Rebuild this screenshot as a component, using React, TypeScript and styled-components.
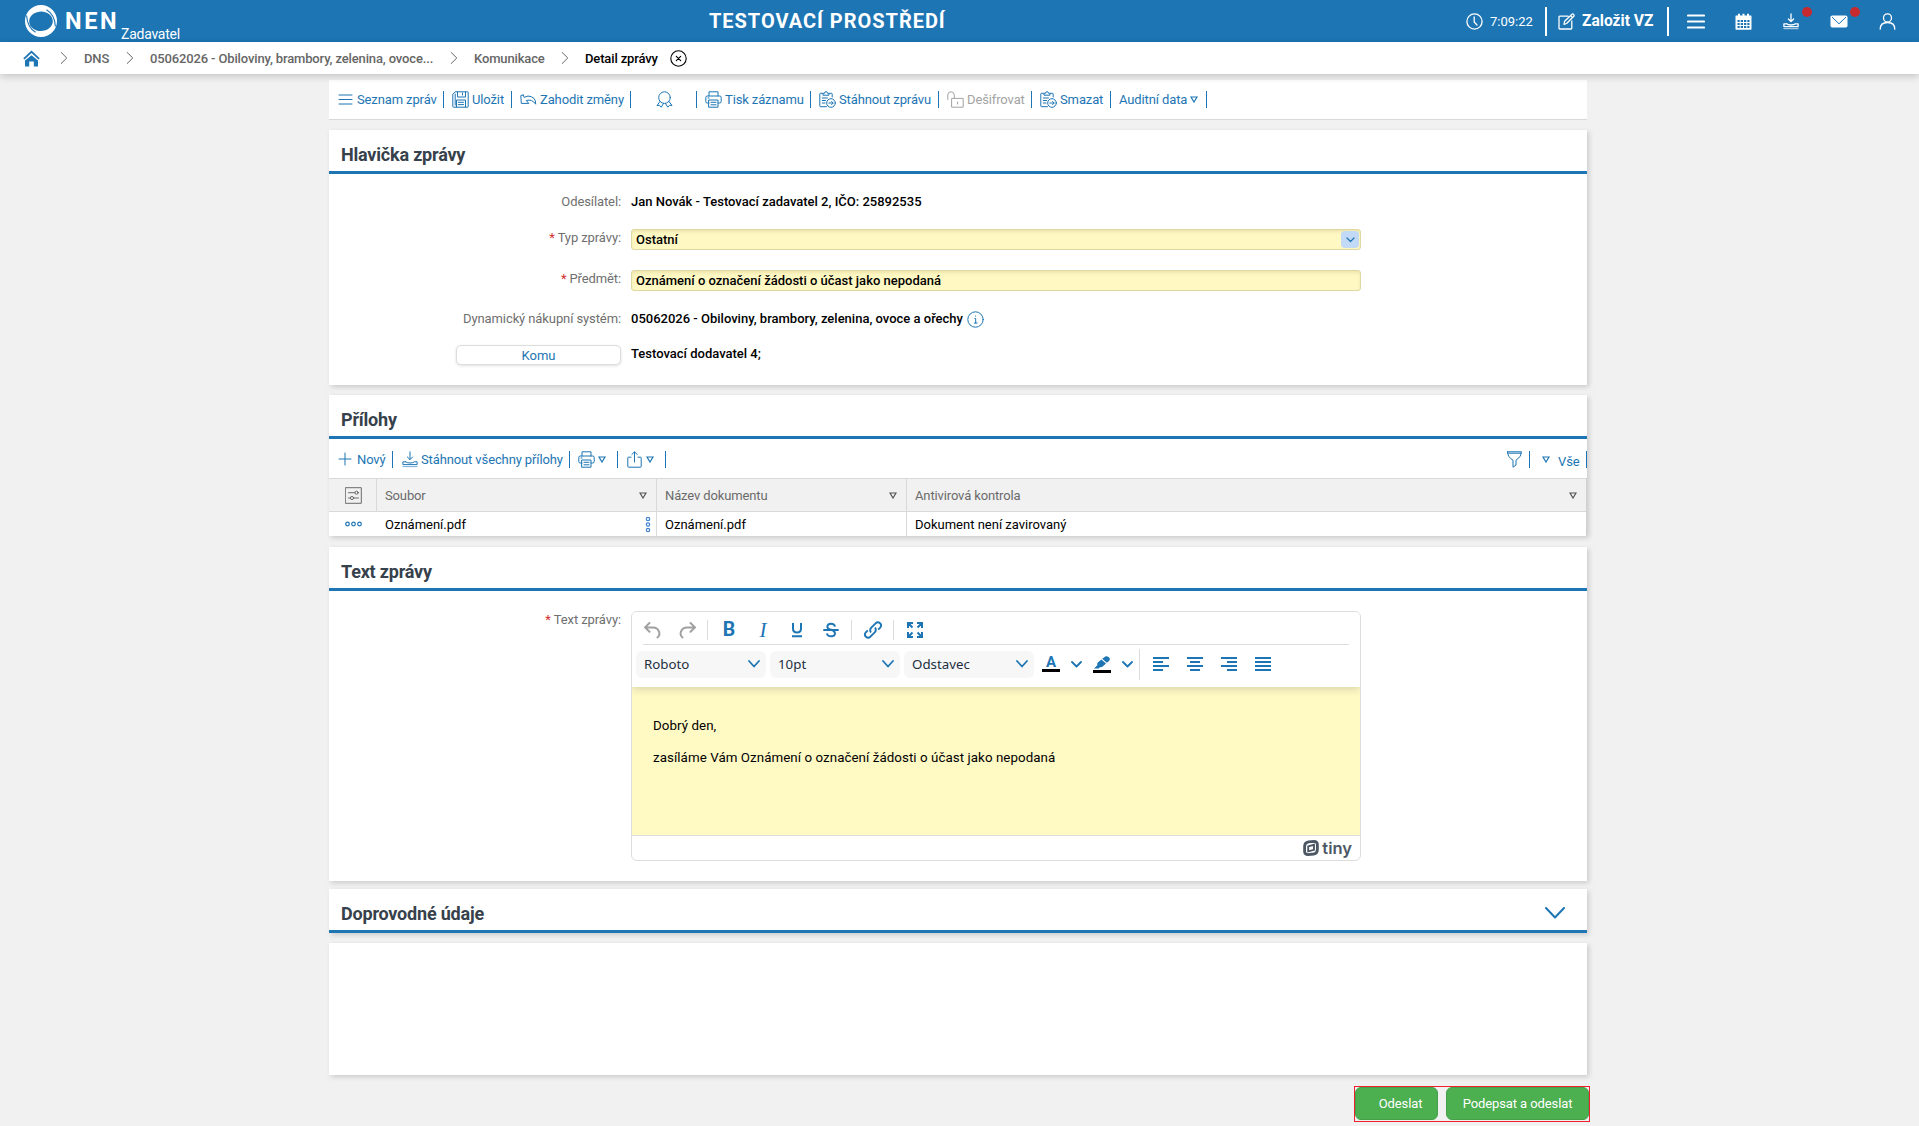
import React from "react";
import styled, { createGlobalStyle, css } from "styled-components";

const blue = "#1d75b4";
const line = "#d9d9d9";

const GlobalStyle = createGlobalStyle`
  *, *::before, *::after { box-sizing: border-box; }
  html, body { margin: 0; padding: 0; background: #f1f1f1; }
  body { font-family: Roboto, "Liberation Sans", sans-serif; font-size: 13px; color: #000; }
  svg { display: block; flex: none; }
`;

const Page = styled.div`
  height: 1126px;
  overflow: hidden;
  display: flex;
  flex-direction: column;
`;

/* ---------- top bar ---------- */

const TopBar = styled.header`
  height: 42px;
  flex: none;
  display: grid;
  grid-template-columns: 709px 1fr auto;
  background: ${blue};
  color: #fff;
`;

const Brand = styled.div`
  display: flex;
  align-items: flex-start;
  padding: 4px 0 0 24px;
`;

const BrandName = styled.span`
  width: 56px;
  margin-left: 7px;
  padding-top: 4px;
  font-size: 23.5px;
  line-height: 27px;
  font-weight: 700;
  letter-spacing: 2.6px;
`;

const BrandRole = styled.span`
  padding-top: 21px;
  font-size: 14px;
  line-height: 18px;
  letter-spacing: -0.25px;
`;

const Environment = styled.div`
  font-size: 20px;
  line-height: 43px;
  font-weight: 700;
  letter-spacing: 0.97px;
  white-space: nowrap;
`;

const TopActions = styled.div`
  display: flex;
  align-items: center;
  height: 42px;
  padding-right: 22px;
`;

const Clock = styled.div`
  display: flex;
  align-items: center;
  gap: 7px;
  width: 79px;
`;

const TopRule = styled.i`
  width: 2px;
  height: 29px;
  background: #fff;
`;

const NewTender = styled.div`
  display: flex;
  align-items: center;
  gap: 6px;
  width: 120px;
  padding-left: 11px;
  font-size: 15.6px;
  font-weight: 700;
  white-space: nowrap;
`;

const TopIcon = styled.div<{ $l?: number }>`
  position: relative;
  width: 48px;
  height: 42px;
  margin-left: ${(p) => p.$l ?? 0}px;
  display: flex;
  align-items: center;
  justify-content: center;
  &:last-child { margin-right: -14px; }
`;

const Dot = styled.i`
  position: absolute;
  right: 3px;
  top: 7px;
  width: 10px;
  height: 10px;
  border-radius: 50%;
  background: #c62a2f;
`;

/* ---------- breadcrumb ---------- */

const Crumbs = styled.nav`
  height: 32px;
  flex: none;
  display: flex;
  align-items: center;
  padding-left: 23px;
  background: #fff;
  box-shadow: 0 2px 8px rgba(0, 0, 0, 0.2);
  position: relative;
`;

const Crumb = styled.span<{ $w: number; $current?: boolean }>`
  width: ${(p) => p.$w}px;
  font-weight: 500;
  letter-spacing: -0.14px;
  color: ${(p) => (p.$current ? "#000" : "#666")};
  white-space: nowrap;
`;

const CrumbArrow = styled.span`
  width: 8px;
  margin-right: 16px;
`;

/* ---------- content ---------- */

const Content = styled.main`
  width: 1258px;
  margin-left: 329px;
  padding-top: 6px;
  display: flex;
  flex-direction: column;
`;

const Toolbar = styled.div`
  height: 40px;
  display: flex;
  align-items: center;
  background: #fff;
  border-bottom: 1px solid ${line};
`;

const Tool = styled.div<{ $w: number; $pad?: number; $gap?: number; $off?: boolean }>`
  width: ${(p) => p.$w}px;
  height: 17px;
  margin-bottom: 1px;
  padding-left: ${(p) => p.$pad ?? 8}px;
  display: flex;
  align-items: center;
  gap: ${(p) => p.$gap ?? 3}px;
  border-right: 1px solid ${blue};
  letter-spacing: -0.12px;
  color: ${(p) => (p.$off ? "#a3a3a3" : blue)};
  white-space: nowrap;
`;

const Panel = styled.section<{ $top: number; $h: number }>`
  height: ${(p) => p.$h}px;
  margin-top: ${(p) => p.$top}px;
  background: #fff;
  box-shadow: 2px 2px 5px rgba(0, 0, 0, 0.16);
`;

const PanelTitle = styled.h2`
  height: 44px;
  margin: 0;
  padding: 8px 22px 0 12px;
  display: flex;
  align-items: center;
  justify-content: space-between;
  border-bottom: 3px solid ${blue};
  font-size: 18px;
  font-weight: 700;
  letter-spacing: -0.2px;
  color: #36414b;
  & > svg { margin-bottom: 2px; color: ${blue}; }
`;

const FormRow = styled.div<{ $h: number }>`
  height: ${(p) => p.$h}px;
  display: grid;
  grid-template-columns: 292px 730px;
  column-gap: 10px;
  align-items: start;
`;

const Label = styled.label<{ $lift?: number }>`
  padding-top: ${(p) => p.$lift ?? 0}px;
  line-height: 18px;
  text-align: right;
  letter-spacing: -0.1px;
  color: #6f6f6f;
`;

const Star = styled.span`
  margin-right: 3px;
  color: #d32f2f;
`;

const Value = styled.div`
  padding-top: 1px;
  display: flex;
  align-items: center;
  gap: 4px;
  line-height: 20px;
  font-weight: 500;
`;

const Input = styled.div`
  height: 21px;
  padding: 0 1px 0 4px;
  display: flex;
  align-items: center;
  justify-content: space-between;
  border: 1px solid #ddd7a4;
  border-radius: 3px;
  background: #fff8c3;
  box-shadow: inset 0 2px 3px rgba(120, 110, 20, 0.13);
  font-weight: 500;
`;

const DropMark = styled.span`
  width: 18px;
  height: 17px;
  display: grid;
  place-items: center;
  border-radius: 4px;
  background: #c3daf6;
  color: ${blue};
`;

const Recipient = styled.button`
  justify-self: end;
  width: 165px;
  height: 20px;
  margin-top: 2px;
  padding: 0;
  border: 1px solid #ddd;
  border-radius: 5px;
  background: #fff;
  box-shadow: 0 1px 3px rgba(0, 0, 0, 0.12);
  font: inherit;
  color: ${blue};
`;

/* ---------- attachments ---------- */

const ListTools = styled.div`
  height: 39px;
  padding-top: 2px;
  display: flex;
  align-items: center;
`;

const Spacer = styled.div`
  flex: 1;
`;

const Lowered = styled.span`
  padding-top: 4px;
`;

const Table = styled.div`
  width: 1258px;
  border-right: 1px solid #d0d0d0;
`;

const rowCells = css`
  display: grid;
  grid-template-columns: 48px 280px 250px 1fr;
`;

const HeadRow = styled.div`
  ${rowCells}
  height: 34px;
  border-top: 1px solid ${line};
  border-bottom: 1px solid ${line};
  background: #f1f1f1;
  letter-spacing: -0.13px;
  color: #6b6b6b;
`;

const BodyRow = styled.div`
  ${rowCells}
  height: 24px;
`;

const Cell = styled.div<{ $icon?: boolean; $plain?: boolean; $right?: number }>`
  display: flex;
  align-items: center;
  justify-content: ${(p) => (p.$icon ? "center" : "space-between")};
  padding: 0 ${(p) => (p.$icon ? 0 : p.$right ?? 9)}px 0 ${(p) => (p.$icon ? 1 : 8)}px;
  border-right: 1px solid ${(p) => (p.$plain ? "transparent" : line)};
  &:last-child { border-right: 0; }
`;

/* ---------- editor ---------- */

const Editor = styled.div`
  height: 250px;
  display: flex;
  flex-direction: column;
  border: 1px solid #ddd;
  border-radius: 6px;
  overflow: hidden;
`;

const EditorBars = styled.div`
  height: 75px;
  flex: none;
  position: relative;
  background: #fff;
  box-shadow: 0 2px 8px rgba(34, 47, 62, 0.18);
`;

const EditorRow = styled.div<{ $h: number; $ruled?: boolean }>`
  height: ${(p) => p.$h}px;
  margin: 0 ${(p) => (p.$ruled ? 11 : 0)}px;
  padding-top: ${(p) => (p.$ruled ? 4 : 0)}px;
  display: flex;
  align-items: center;
  border-bottom: ${(p) => (p.$ruled ? "1px solid #ddd" : "0")};
  color: ${blue};
`;

const EditorButton = styled.span<{ $w?: number; $off?: boolean }>`
  width: ${(p) => p.$w ?? 34}px;
  height: 28px;
  flex: none;
  display: flex;
  flex-direction: column;
  align-items: center;
  justify-content: center;
  color: ${(p) => (p.$off ? "#a0a0a0" : blue)};
`;

const Rule = styled.i<{ $h: number; $l: number; $r: number }>`
  width: 1px;
  height: ${(p) => p.$h}px;
  margin: 0 ${(p) => p.$r}px 0 ${(p) => p.$l}px;
  flex: none;
  background: #dcdcdc;
`;

const BoldMark = styled.span`
  font-size: 19.5px;
  line-height: 24px;
  font-weight: 700;
`;

const ItalicMark = styled.span`
  font-family: "Liberation Serif", serif;
  font-size: 21px;
  line-height: 24px;
  font-style: italic;
`;

const ColorMark = styled.span`
  height: 12px;
  font-size: 15px;
  line-height: 13px;
  font-weight: 700;
`;

const ColorBar = styled.i`
  width: 18px;
  height: 3px;
  margin-top: 1px;
  background: #000;
`;

const Select = styled.div`
  width: 130px;
  height: 27px;
  margin-right: 4px;
  padding: 0 6px 0 8px;
  display: flex;
  align-items: center;
  justify-content: space-between;
  border-radius: 6px;
  background: #f7f7f7;
  font-family: "Noto Sans", sans-serif;
  font-size: 13.3px;
  color: #222f3e;
  & > svg { color: ${blue}; }
`;

const EditorBody = styled.div`
  flex: 1;
  padding: 31px 21px;
  background: #fff9c4;
  font-size: 13.333px;
  line-height: 16px;
  letter-spacing: 0.06px;
`;

const Paragraph = styled.p`
  margin: 0 0 16px;
`;

const StatusBar = styled.div`
  height: 25px;
  flex: none;
  padding-right: 8px;
  display: flex;
  align-items: center;
  justify-content: flex-end;
  gap: 3px;
  border-top: 1px solid #ddd;
  font-family: Inter, sans-serif;
  font-size: 16.5px;
  font-weight: 600;
  color: #4c5765;
`;

/* ---------- footer ---------- */

const Submit = styled.div`
  align-self: flex-end;
  width: 236px;
  height: 36px;
  margin: 11px -3px 0 0;
  display: flex;
  justify-content: space-between;
  border: 1px solid #f0202c;
`;

const Green = styled.button<{ $w: number; $shift?: number }>`
  width: ${(p) => p.$w}px;
  height: 33px;
  padding: 0 0 0 ${(p) => p.$shift ?? 0}px;
  border: 1px solid #46a049;
  border-radius: 6px;
  background: #4caf50;
  font: inherit;
  letter-spacing: -0.1px;
  color: #fff;
`;

/* ---------- icons ---------- */

type IconProps = { w?: number; h?: number; sw?: number; box?: string; children: React.ReactNode };

const Icon = ({ w = 17, h = 17, sw = 1, box, children }: IconProps) => (
  <svg width={w} height={h} viewBox={box ?? `0 0 ${w} ${h}`} fill="none" stroke="currentColor" strokeWidth={sw} strokeLinecap="round" strokeLinejoin="round">
    {children}
  </svg>
);

const Lines = ({ w = 15, sw = 1, step = 4.5 }) => (
  <Icon w={w} h={17} sw={sw}>
    <path d={`M1 ${8.5 - step}H${w - 1}M1 8.5H${w - 1}M1 ${8.5 + step}H${w - 1}`} />
  </Icon>
);

const Triangle = ({ c = blue }) => (
  <svg width="8" height="7" viewBox="0 0 8 7" fill="none" stroke={c} strokeWidth="1.2">
    <path d="M1 1H7L4 6Z" />
  </svg>
);

const Chevron = ({ w = 12, h = 8, sw = 1.8 }) => (
  <Icon w={w} h={h} sw={sw}>
    <path d={`M1 1L${w / 2} ${h - 1.5}L${w - 1} 1`} />
  </Icon>
);

const Printer = () => (
  <Icon>
    <path d="M4 5V.8H13V5M4 12H2.2Q.8 12 .8 10.5V6.5Q.8 5 2.2 5H14.8Q16.2 5 16.2 6.5V10.5Q16.2 12 14.8 12H13M4 9H13V16.2H4ZM6 11.3H11M6 13.8H11M3 7H4" />
  </Icon>
);

const Clipboard = () => (
  <Icon>
    <path d="M7.5 15.7H1.5Q.8 15.7.8 15V3Q.8 2.3 1.5 2.3H4V4.2H10V2.3H12.5Q13.2 2.3 13.2 3V6M4.5 2.3H5.5Q5.5.7 7 .7T8.6 2.3H9.5M3.3 7H8.5M3.3 9.5H6.5M3.3 12H6" />
    <circle cx="12" cy="12" r="4.3" />
    <path d="M9.8 12H14M12.6 10.4L14.2 12L12.6 13.6" />
  </Icon>
);

const Download = ({ sw = 1.1 }) => (
  <Icon w={16} h={17} sw={sw}>
    <path d="M8 .8V8.4M5.4 6L8 8.6L10.6 6M3.6 10.8H.9V13.6H15.1V10.8H12.4Q11.2 12 8 12T3.6 10.8" />
    <path d="M.9 15.6H15.1" strokeOpacity="0.6" />
  </Icon>
);

const Align = ({ rows }: { rows: [number, number][] }) => (
  <svg width="16" height="14" viewBox="0 0 16 14" fill="currentColor">
    {rows.map(([x, w], i) => (
      <rect key={i} x={x} y={i * 4} width={w} height="2" />
    ))}
  </svg>
);

const BackArrow = ({ flip }: { flip?: boolean }) => (
  <Icon w={18} h={18} sw={2}>
    <path transform={flip ? "matrix(-1 0 0 1 18 0)" : undefined} d="M6.5 2L2 6.4L6.5 10.8M2.5 6.4H10C16.5 6.4 18 14 14.5 16.5" />
  </Icon>
);

const Arrow = () => (
  <CrumbArrow>
    <Icon w={8} h={14} sw={1}>
      <path d="M1.2 1.5L6.8 7L1.2 12.5" stroke="#666" />
    </Icon>
  </CrumbArrow>
);

const Form = styled.div<{ $top: number }>`
  padding-top: ${(p) => p.$top}px;
`;

export default function App() {
  return (
    <Page>
      <GlobalStyle />
      <TopBar>
        <Brand>
          <svg width="34" height="34" viewBox="0 0 34 34">
            <path fill="#fff" fillRule="evenodd" d="M17 1A16 16 0 1 0 17 33A16 16 0 1 0 17 1ZM17.4 7.4C22.6 7.4 28.8 11 28.8 17C28.8 23 23 27 17 27C11 27 5.2 23.4 5.2 17.2C5.2 11 11.6 7.4 17.4 7.4Z" />
            <path d="M2.6 11.5C3 18.5 5.5 24.8 11.6 28.2M31.4 22.5C31 15.5 28.5 9.2 22.4 5.8" fill="none" stroke={blue} strokeWidth="1.1" />
          </svg>
          <BrandName>NEN</BrandName>
          <BrandRole>Zadavatel</BrandRole>
        </Brand>
        <Environment>TESTOVACÍ PROSTŘEDÍ</Environment>
        <TopActions>
          <Clock>
            <Icon sw={1.3}>
              <circle cx="8.5" cy="8.5" r="7.6" />
              <path d="M8.2 4V9L11 12" />
            </Icon>
            7:09:22
          </Clock>
          <TopRule />
          <NewTender>
            <Icon w={18} sw={1.3}>
              <path d="M10 3.2H1.7Q1 3.2 1 4V15.3Q1 16 1.7 16H13Q13.8 16 13.8 15.3V8M6 11.3L6.6 8.3L14 1.2Q14.7.6 15.5 1.3T16 3L8.6 10.5ZM12.6 2.6L14.5 4.6" />
            </Icon>
            Založit VZ
          </NewTender>
          <TopRule />
          <TopIcon $l={3}><Lines w={18} sw={2.2} step={6} /></TopIcon>
          <TopIcon $l={-1}>
            <svg width="17" height="17" viewBox="0 0 17 17" fill="#fff">
              <path fillRule="evenodd" d="M1 2.5H3V.7H5V2.5H7.5V.7H9.5V2.5H12V.7H14V2.5H16Q16.5 2.5 16.5 3V16Q16.5 16.7 16 16.7H1Q.5 16.7.5 16V3Q.5 2.5 1 2.5ZM2.5 7V9H4.7V7ZM5.7 7V9H8V7ZM9 7V9H11.3V7ZM12.3 7V9H14.5V7ZM2.5 10V12H4.7V10ZM5.7 10V12H8V10ZM9 10V12H11.3V10ZM12.3 10V12H14.5V10ZM2.5 13V15H4.7V13ZM5.7 13V15H8V13ZM9 13V15H11.3V13ZM12.3 13V15H14.5V13Z" />
            </svg>
          </TopIcon>
          <TopIcon><Download sw={1.3} /><Dot /></TopIcon>
          <TopIcon>
            <svg width="18" height="13" viewBox="0 0 18 13">
              <rect x=".5" y=".5" width="17" height="12" rx="1.8" fill="#fff" />
              <path d="M2 2L9 8.8L16 2" fill="none" stroke={blue} />
            </svg>
            <Dot />
          </TopIcon>
          <TopIcon>
            <Icon sw={1.3}>
              <circle cx="8.5" cy="4.9" r="4" />
              <path d="M1.2 16.2Q1.2 9.5 8.5 9.5T15.8 16.2" />
            </Icon>
          </TopIcon>
        </TopActions>
      </TopBar>

      <Crumbs>
        <Crumb $w={37}>
          <svg width="17" height="17" viewBox="0 0 17 17" fill={blue}>
            <path d="M8.5 5.2L15 10.6V16.5H10.8V11.5H6.2V16.5H2V10.6ZM.3 8.2L8.5.4L16.7 8.2L15.5 9.4L8.5 3L1.5 9.4Z" />
          </svg>
        </Crumb>
        <Arrow />
        <Crumb $w={42}>DNS</Crumb>
        <Arrow />
        <Crumb $w={300}>05062026 - Obiloviny, brambory, zelenina, ovoce...</Crumb>
        <Arrow />
        <Crumb $w={87}>Komunikace</Crumb>
        <Arrow />
        <Crumb $w={85} $current>Detail zprávy</Crumb>
        <Icon sw={1.1}>
          <circle cx="8.5" cy="8.5" r="7.7" stroke="#000" />
          <path d="M6.3 6.3L10.7 10.7M10.7 6.3L6.3 10.7" stroke="#000" />
        </Icon>
      </Crumbs>

      <Content>
        <Toolbar>
          <Tool $w={115} $pad={9} $gap={4}><Lines />Seznam zpráv</Tool>
          <Tool $w={68}>
            <Icon>
              <path d="M3.5.8H15.5Q16.2.8 16.2 1.5V15.5Q16.2 16.2 15.5 16.2H1.5Q.8 16.2.8 15.5V3.5ZM3.2 3V14M5.5 1V6H13.5V1M10.5 2V4M4.5 16V9H13.5V16M6.3 11.3H11.5M6.3 13.6H11.5" />
            </Icon>
            Uložit
          </Tool>
          <Tool $w={119}>
            <Icon>
              <path d="M3.2 3.9L.8 4.6L1.3 12.4H8.8L6.3 9.5Q12 7.8 15.7 13.2Q16 5.6 8 5L4.2 6.4L3.2 3.9" />
            </Icon>
            Zahodit změny
          </Tool>
          <Tool $w={66} $pad={25}>
            <Icon>
              <circle cx="8.5" cy="6.6" r="5.8" />
              <path d="M4 10.5L1 14.5L3.5 14.3L5.2 16.2L7.5 12.5M13 10.5L16 14.5L13.5 14.3L11.8 16.2L9.5 12.5" />
            </Icon>
          </Tool>
          <Tool $w={114}><Printer />Tisk záznamu</Tool>
          <Tool $w={128}><Clipboard />Stáhnout zprávu</Tool>
          <Tool $w={93} $off>
            <Icon>
              <path d="M5 7.4H16.2V16.2H5ZM.8 8.5V4Q.8.8 4 .8T7.3 4V7.2M10.6 11V13" />
            </Icon>
            Dešifrovat
          </Tool>
          <Tool $w={79}><Clipboard />Smazat</Tool>
          <Tool $w={96}>Auditní data <Triangle /></Tool>
        </Toolbar>

        <Panel $top={10} $h={255}>
          <PanelTitle>Hlavička zprávy</PanelTitle>
          <Form $top={17}>
            <FormRow $h={38}>
              <Label $lift={2}>Odesílatel:</Label>
              <Value>Jan Novák - Testovací zadavatel 2, IČO: 25892535</Value>
            </FormRow>
            <FormRow $h={41}>
              <Label><Star>*</Star>Typ zprávy:</Label>
              <Input>
                Ostatní
                <DropMark><Chevron w={9} h={6} sw={1.2} /></DropMark>
              </Input>
            </FormRow>
            <FormRow $h={38}>
              <Label><Star>*</Star>Předmět:</Label>
              <Input>Oznámení o označení žádosti o účast jako nepodaná</Input>
            </FormRow>
            <FormRow $h={35}>
              <Label $lift={2}>Dynamický nákupní systém:</Label>
              <Value>
                05062026 - Obiloviny, brambory, zelenina, ovoce a ořechy
                <Icon>
                  <circle cx="8.5" cy="8.5" r="7.7" stroke={blue} />
                  <path d="M8.5 5V5.2M7.8 7.5H8.7V12M7.5 12H10" stroke={blue} />
                </Icon>
              </Value>
            </FormRow>
            <FormRow $h={24}>
              <Recipient>Komu</Recipient>
              <Value>Testovací dodavatel 4;</Value>
            </FormRow>
          </Form>
        </Panel>

        <Panel $top={10} $h={141}>
          <PanelTitle>Přílohy</PanelTitle>
          <ListTools>
            <Tool $w={64} $pad={9} $gap={5}>
              <Icon w={14} h={14}><path d="M7 1V13M1 7H13" /></Icon>
              Nový
            </Tool>
            <Tool $w={177} $pad={9}><Download sw={1} />Stáhnout všechny přílohy</Tool>
            <Tool $w={48}><Printer /><Triangle /></Tool>
            <Tool $w={48} $pad={9} $gap={4}>
              <Icon w={15}>
                <path d="M4 6.2H1.5Q.8 6.2.8 7V15.5Q.8 16.2 1.5 16.2H13.5Q14.2 16.2 14.2 15.5V7Q14.2 6.2 13.5 6.2H11M7.5 11V1M4.8 3.5L7.5.8L10.2 3.5" />
              </Icon>
              <Triangle />
            </Tool>
            <Spacer />
            <Tool $w={32}>
              <Icon><path d="M1.5.8H15.5Q15.5 6 10 9.2V14L7 16.2V9.2Q1.5 6 1.5.8ZM2 2.2H15" /></Icon>
            </Tool>
            <Tool $w={57} $pad={12} $gap={8}><Triangle /><Lowered>Vše</Lowered></Tool>
          </ListTools>
          <Table>
            <HeadRow>
              <Cell $icon>
                <Icon>
                  <path d="M.7.7H16.3V16.3H.7ZM3.5 5.7H10M13 5.7H13.5M3.5 11H5.5M9 11H13.5" />
                  <circle cx="11.5" cy="5.7" r="1.6" />
                  <circle cx="7" cy="11" r="1.6" />
                </Icon>
              </Cell>
              <Cell>Soubor<Triangle c="#555" /></Cell>
              <Cell>Název dokumentu<Triangle c="#555" /></Cell>
              <Cell>Antivirová kontrola<Triangle c="#555" /></Cell>
            </HeadRow>
            <BodyRow>
              <Cell $icon $plain>
                <svg width="17" height="6" viewBox="0 0 17 6" fill="none" stroke={blue} strokeWidth="1.2">
                  <circle cx="2.5" cy="3" r="1.8" /><circle cx="8.5" cy="3" r="1.8" /><circle cx="14.5" cy="3" r="1.8" />
                </svg>
              </Cell>
              <Cell $right={5}>
                Oznámení.pdf
                <svg width="6" height="17" viewBox="0 0 6 17" fill="none" stroke="#3f82d6" strokeWidth="1.2">
                  <circle cx="3" cy="3" r="1.7" /><circle cx="3" cy="8.5" r="1.7" /><circle cx="3" cy="14" r="1.7" />
                </svg>
              </Cell>
              <Cell>Oznámení.pdf</Cell>
              <Cell>Dokument není zavirovaný</Cell>
            </BodyRow>
          </Table>
        </Panel>

        <Panel $top={11} $h={334}>
          <PanelTitle>Text zprávy</PanelTitle>
          <Form $top={20}>
            <FormRow $h={250}>
              <Label><Star>*</Star>Text zprávy:</Label>
              <Editor>
                <EditorBars>
                  <EditorRow $h={33} $ruled>
                    <EditorButton $w={18} $off><BackArrow /></EditorButton>
                    <EditorButton $w={54} $off><BackArrow flip /></EditorButton>
                    <Rule $h={20} $l={-8} $r={4} />
                    <EditorButton><BoldMark>B</BoldMark></EditorButton>
                    <EditorButton><ItalicMark>I</ItalicMark></EditorButton>
                    <EditorButton>
                      <Icon w={12} h={16} sw={2}>
                        <path d="M2 1V6.5Q2 10.5 6 10.5T10 6.5V1M1 14.3H11" strokeLinecap="butt" />
                      </Icon>
                    </EditorButton>
                    <EditorButton>
                      <Icon w={16} h={16} sw={1.9}>
                        <path d="M12 4.6Q11.5 1.7 8 1.7T4.3 4.6Q4.3 7 8 7.8T12 11.3Q12 14.3 8.2 14.3T4 11.3M.3 8H15.7" strokeLinecap="butt" />
                      </Icon>
                    </EditorButton>
                    <Rule $h={20} $l={3} $r={4} />
                    <EditorButton>
                      <Icon w={20} h={20} box="0 0 20 20" sw={1.9}>
                        <path d="M8 12.6Q6.2 9.8 8.3 7.6L12.6 3.3Q14.8 1.3 17 3.2T17.2 7.6L15.2 9.6M12 7.4Q13.8 10.2 11.7 12.4L7.4 16.7Q5.2 18.7 3 16.8T2.8 12.4L4.8 10.4" strokeLinecap="butt" />
                      </Icon>
                    </EditorButton>
                    <Rule $h={20} $l={3} $r={4} />
                    <EditorButton>
                      <Icon w={16} h={16} sw={2}>
                        <path strokeLinecap="butt" strokeLinejoin="miter" d="M1 6V1H6M10 1H15V6M15 10V15H10M6 15H1V10M1.5 1.5L5.5 5.5M14.5 1.5L10.5 5.5M14.5 14.5L10.5 10.5M1.5 14.5L5.5 10.5" />
                      </Icon>
                    </EditorButton>
                  </EditorRow>
                  <EditorRow $h={38}>
                    <Rule $h={0} $l={0} $r={3} />
                    <Select>Roboto<Chevron /></Select>
                    <Select>10pt<Chevron /></Select>
                    <Select>Odstavec<Chevron /></Select>
                    <EditorButton $w={26}><ColorMark>A</ColorMark><ColorBar /></EditorButton>
                    <EditorButton $w={24}><Chevron w={11} h={7} /></EditorButton>
                    <EditorButton $w={28}>
                      <svg width="16" height="13" viewBox="0 0 16 13" fill="currentColor">
                        <path d="M10 1.5Q12-.6 14.5 1T15 5L12.8 6.8L8.2 2.8ZM7.3 3.4L12 7.6L8 11L5.8 11.2L4.8 12.5H0L3.3 9.2V7Z" />
                      </svg>
                      <ColorBar />
                    </EditorButton>
                    <EditorButton $w={22}><Chevron w={11} h={7} /></EditorButton>
                    <Rule $h={31} $l={1} $r={4} />
                    <EditorButton><Align rows={[[0, 16], [0, 10], [0, 16], [0, 10]]} /></EditorButton>
                    <EditorButton><Align rows={[[0, 16], [3, 10], [0, 16], [3, 10]]} /></EditorButton>
                    <EditorButton><Align rows={[[0, 16], [6, 10], [0, 16], [6, 10]]} /></EditorButton>
                    <EditorButton><Align rows={[[0, 16], [0, 16], [0, 16], [0, 16]]} /></EditorButton>
                  </EditorRow>
                </EditorBars>
                <EditorBody>
                  <Paragraph>Dobrý den,</Paragraph>
                  <Paragraph>zasíláme Vám Oznámení o označení žádosti o účast jako nepodaná</Paragraph>
                </EditorBody>
                <StatusBar>
                  <svg width="16" height="16" viewBox="0 0 16 16" fill="none" stroke="currentColor">
                    <path d="M5.5 1.9L11 1.4Q14.3 1.4 14.4 4.6V9.6Q14.2 13.4 10.8 14L5 14.6Q1.6 14.6 1.6 11.4V6.2Q1.8 2.6 5.5 1.9Z" strokeWidth="2.8" />
                    <path d="M5.2 6.4L11 4.8V9.8L5.2 11.3Z" strokeWidth="1.9" />
                  </svg>
                  tiny
                </StatusBar>
              </Editor>
            </FormRow>
          </Form>
        </Panel>

        <Panel $top={8} $h={44}>
          <PanelTitle>Doprovodné údaje<Chevron w={20} h={12} sw={2} /></PanelTitle>
        </Panel>
        <Panel $top={10} $h={132} />
        <Submit>
          <Green $w={83} $shift={8}>Odeslat</Green>
          <Green $w={143}>Podepsat a odeslat</Green>
        </Submit>
      </Content>
    </Page>
  );
}
